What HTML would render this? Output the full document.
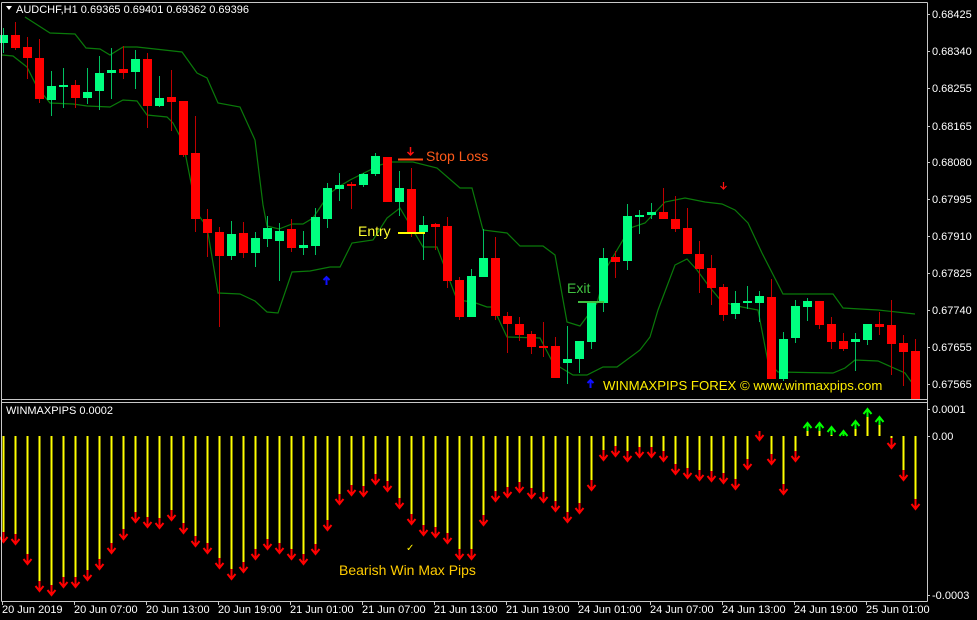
<!DOCTYPE html>
<html><head><meta charset="utf-8">
<style>
html,body{margin:0;padding:0;background:#000;width:977px;height:620px;overflow:hidden}
svg{display:block}
text{font-family:"Liberation Sans",sans-serif}
</style></head>
<body>
<svg id="s" width="977" height="620" xmlns="http://www.w3.org/2000/svg">
<rect width="977" height="620" fill="#000"/>
<g id="bands"></g>
<g id="cand"></g>
<g id="ind"></g>
<g stroke="#c8c8c8" fill="none" stroke-width="1">
<line x1="1.5" y1="2.5" x2="927.5" y2="2.5"/>
<line x1="1.5" y1="2.5" x2="1.5" y2="601.5"/>
<line x1="927.5" y1="2.5" x2="927.5" y2="601.5"/>
<line x1="1.5" y1="399.5" x2="927.5" y2="399.5"/>
<line x1="1.5" y1="402.5" x2="927.5" y2="402.5"/>
<line x1="1.5" y1="601.5" x2="927.5" y2="601.5"/>
</g>
<g id="ticks" stroke="#c8c8c8"></g>
<path d="M6 6 L12 6 L9 10 Z" fill="#fff"/>
<text x="16" y="13" font-size="11" fill="#fff">AUDCHF,H1  0.69365 0.69401 0.69362 0.69396</text>
<text x="6" y="414" font-size="11" fill="#fff">WINMAXPIPS 0.0002</text>
<g font-size="11" fill="#fff">
<text x="932" y="18">0.68425</text>
<text x="932" y="55">0.68340</text>
<text x="932" y="92">0.68255</text>
<text x="932" y="130">0.68165</text>
<text x="932" y="166">0.68080</text>
<text x="932" y="203">0.67995</text>
<text x="932" y="240">0.67910</text>
<text x="932" y="277">0.67825</text>
<text x="932" y="314">0.67740</text>
<text x="932" y="351">0.67655</text>
<text x="932" y="388">0.67565</text>
<text x="932" y="413">0.0001</text>
<text x="932" y="440">0.00</text>
<text x="932" y="599">-0.0003</text>
</g>
<g font-size="11" fill="#fff">
<text x="2" y="613">20 Jun 2019</text>
<text x="74" y="613">20 Jun 07:00</text>
<text x="146" y="613">20 Jun 13:00</text>
<text x="218" y="613">20 Jun 19:00</text>
<text x="290" y="613">21 Jun 01:00</text>
<text x="362" y="613">21 Jun 07:00</text>
<text x="434" y="613">21 Jun 13:00</text>
<text x="506" y="613">21 Jun 19:00</text>
<text x="578" y="613">24 Jun 01:00</text>
<text x="650" y="613">24 Jun 07:00</text>
<text x="722" y="613">24 Jun 13:00</text>
<text x="794" y="613">24 Jun 19:00</text>
<text x="866" y="613">25 Jun 01:00</text>
</g>
<line x1="398" y1="159.5" x2="423" y2="159.5" stroke="#ff4a10" stroke-width="2"/>
<path d="M410.5 147 V155 M407.5 152 L410.5 155 L413.5 152" stroke="#ff1010" stroke-width="1.5" fill="none"/>
<text x="426" y="161" font-size="14" fill="#ff5a1a">Stop Loss</text>
<line x1="398" y1="233" x2="425" y2="233" stroke="#ffff00" stroke-width="2"/>
<text x="358" y="236" font-size="14" fill="#ffff30">Entry</text>
<line x1="578" y1="302" x2="604" y2="302" stroke="#40c040" stroke-width="2"/>
<text x="567" y="293" font-size="14" fill="#40c040">Exit</text>
<path d="M326.5 285 V277 M323.5 280 L326.5 277 L329.5 280" stroke="#1010ff" stroke-width="2" fill="none"/>
<path d="M590.5 388 V380 M587.5 383 L590.5 380 L593.5 383" stroke="#1010ff" stroke-width="2" fill="none"/>
<path d="M723.5 182 V189 M720.5 186 L723.5 189 L726.5 186" stroke="#ff1010" stroke-width="1.2" fill="none"/>
<text x="603" y="390" font-size="13.2" fill="#ffee00">WINMAXPIPS FOREX © www.winmaxpips.com</text>
<text x="339" y="575" font-size="14" fill="#ffcc00">Bearish Win Max Pips</text>
<text x="406" y="551" font-size="10" fill="#ffee00">✓</text>
</svg>
<script>
var NS="http://www.w3.org/2000/svg";
function el(p,t,a){var e=document.createElementNS(NS,t);for(var k in a)e.setAttribute(k,a[k]);document.getElementById(p).appendChild(e);return e;}
var C=[["g",35,43,28,53],["r",35,48,22,50],["r",47,58,37,79],["r",58,99,39,103],["g",86,100,71,116],["g",85,87,68,108],["r",85,98,80,108],["g",92,98,68,104],["g",73,91,56,110],["g",70,73,48,99],["r",69,73,46,79],["g",59,72,50,89],["r",59,106,53,128],["g",98,106,76,107],["r",97,102,70,131],["r",101,155,101,157],["r",153,219,116,232],["r",219,233,209,257],["r",232,256,227,327],["g",234,256,221,260],["r",233,253,222,258],["g",238,253,232,267],["g",228,239,216,247],["g",231,241,223,281],["r",229,248,219,252],["g",245,248,231,255],["g",217,246,208,255],["g",188,219,183,228],["g",185,189,173,201],["r",184,186,182,209],["g",174,185,173,187],["g",156,174,153,176],["r",157,202,157,202],["g",188,202,171,216],["r",189,232,168,237],["g",225,232,216,260],["r",224,227,223,250],["r",226,281,217,288],["r",280,317,277,320],["g",276,317,269,317],["g",258,277,229,277],["r",258,316,237,320],["r",316,324,312,353],["r",324,335,317,341],["r",334,347,331,354],["r",346,348,322,357],["r",346,378,337,378],["g",359,363,326,384],["g",341,359,341,373],["g",302,342,302,349],["g",258,303,248,312],["r",257,262,251,278],["g",216,261,204,270],["g",215,217,210,234],["g",212,215,203,219],["r",212,219,188,219],["r",219,229,196,232],["r",228,254,208,254],["r",254,269,241,293],["r",268,288,255,305],["r",287,315,284,321],["g",303,314,291,319],["g",301,303,286,309],["g",296,303,291,322],["r",297,379,279,379],["g",339,379,332,381],["g",306,338,300,343],["g",301,307,298,321],["r",301,325,301,329],["r",324,342,317,349],["r",341,349,333,351],["g",339,342,333,371],["g",324,340,324,345],["r",324,327,312,335],["r",325,344,300,375],["r",343,352,335,386],["r",351,400,339,400]];
C.forEach(function(c,i){var x=3+12*i;var col=c[0]=="g"?"#00ff80":"#ff0000";var wc=c[0]=="g"?"#00c060":"#c00000";
el("cand","line",{x1:x+.5,y1:c[3],x2:x+.5,y2:c[4],stroke:wc,"stroke-width":1});
el("cand","rect",{x:x-4,y:c[1],width:9,height:Math.max(2,c[2]-c[1]),fill:col});});
function poly(pts){el("bands","polyline",{points:pts,fill:"none",stroke:"#0a7a0a","stroke-width":1.2});}
poly("25,17 50,33 75,34 86,48 100,49 110,55 123,47 137,47 182,52 197,73 207,78 218,103 240,107 255,140 263,205 267,226 279,229 292,224 303,224 313,218 325,200 330,193 340,186 350,180 380,165 390,162 413,162 437,168 460,188 472,188 483,230 507,233 520,246 543,246 555,255 567,322 580,326 597,303 607,267 630,228 645,223 665,202 685,198 705,202 722,204 735,210 748,223 762,253 783,294 833,294 843,308 878,310 915,314");
poly("2,55 13,56 27,67 37,87 50,103 73,104 87,106 110,107 123,100 137,101 147,115 167,117 173,123 183,142 197,213 207,227 218,293 240,294 255,301 267,312 278,313 292,272 310,271 330,267 340,267 352,243 373,240 387,218 400,208 423,247 437,247 457,300 473,302 487,307 493,307 507,337 540,338 553,363 573,375 587,375 603,367 617,367 640,350 650,337 658,310 675,265 687,259 697,270 708,285 722,302 742,307 758,310 768,362 778,372 833,373 845,368 855,360 878,361 905,373 915,387");
var T=[542,544,564,591,595,587,587,580,569,553,539,522,527,528,520,533,546,553,568,579,572,559,549,553,559,564,554,530,504,495,496,484,491,508,524,535,537,543,559,559,525,501,497,492,498,502,511,522,513,490,460,456,461,457,457,461,474,478,480,481,483,489,469,-440,464,494,461,423,423,427,431,421,409,417,448,480,509];
T.forEach(function(t,i){var x=3+12*i+.5;
 if(t<0){t=-t;el("ind","line",{x1:x,y1:t-9,x2:x,y2:t,stroke:"#ff0000","stroke-width":2});
  el("ind","polyline",{points:(x-4)+","+(t-5)+" "+x+","+t+" "+(x+4)+","+(t-5),fill:"none",stroke:"#ff0000","stroke-width":2});return;}
 if(t>436){el("ind","line",{x1:x,y1:436,x2:x,y2:t-10,stroke:"#ffff00","stroke-width":2});
  el("ind","line",{x1:x,y1:t-10,x2:x,y2:t,stroke:"#ff0000","stroke-width":2});
  el("ind","polyline",{points:(x-4)+","+(t-5)+" "+x+","+t+" "+(x+4)+","+(t-5),fill:"none",stroke:"#ff0000","stroke-width":2});}
 else{var s=Math.min(t+8,436);el("ind","line",{x1:x,y1:436,x2:x,y2:s,stroke:"#ffff00","stroke-width":2});
  el("ind","line",{x1:x,y1:s,x2:x,y2:t,stroke:"#00ff00","stroke-width":2});
  el("ind","polyline",{points:(x-4)+","+(t+5)+" "+x+","+t+" "+(x+4)+","+(t+5),fill:"none",stroke:"#00ff00","stroke-width":2});}
});
[14,51,88,126,162,199,236,273,310,347,384,409,436,595].forEach(function(y){el("ticks","line",{x1:927,y1:y+.5,x2:930,y2:y+.5});});
[2,74,146,218,290,362,434,506,578,650,722,794,866].forEach(function(x){el("ticks","line",{x1:x+.5,y1:601,x2:x+.5,y2:605});});
</script>
</body></html>
